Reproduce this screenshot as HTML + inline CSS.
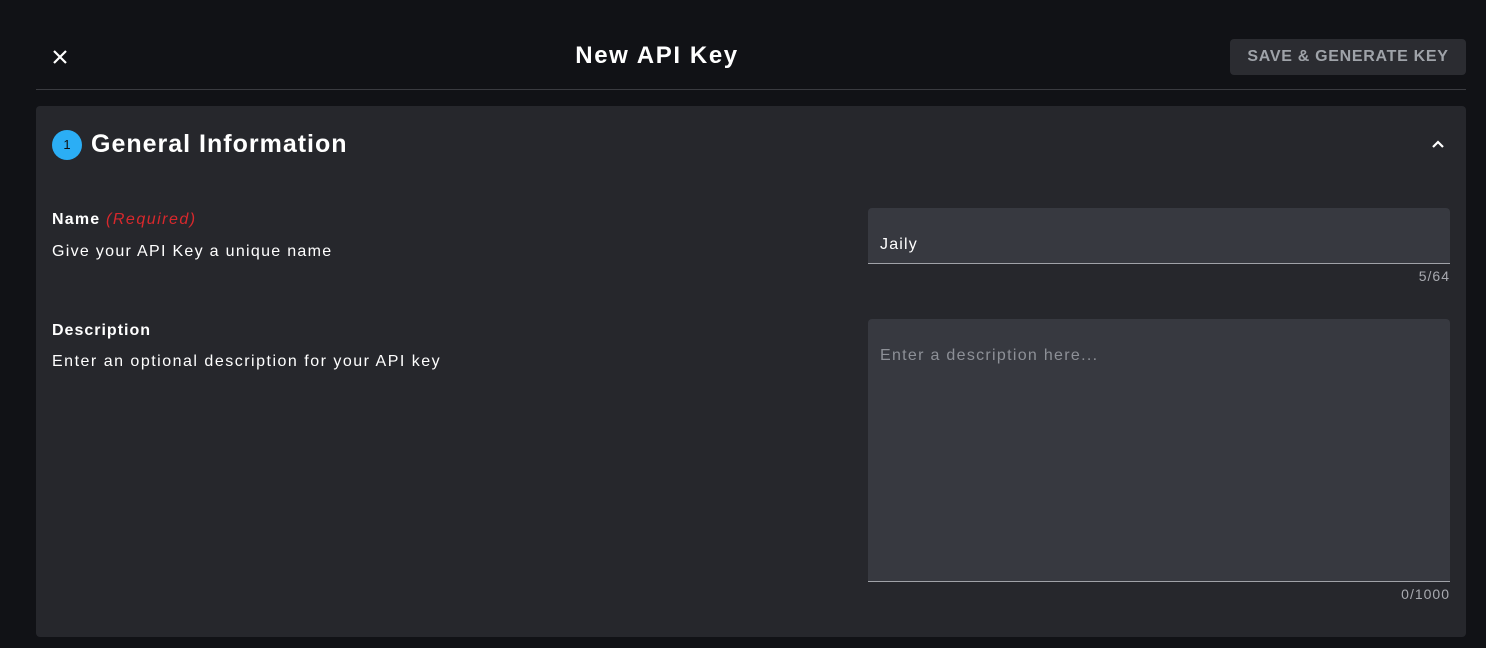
<!DOCTYPE html>
<html><head><style>
*{margin:0;padding:0;box-sizing:border-box}
body{width:1486px;height:648px;background:#111216;font-family:"Liberation Sans",sans-serif;color:#fff;position:relative;overflow:hidden}
.abs{position:absolute}
</style></head><body>
<svg class="abs" style="left:52px;top:49px" width="16" height="16" viewBox="0 0 16 16"><path d="M2 2L14 14M14 2L2 14" stroke="#fff" stroke-width="2.2"/></svg>
<div class="abs" style="left:0;width:1314px;top:42px;text-align:center;font-size:24px;font-weight:bold;letter-spacing:1.6px">New API Key</div>
<div class="abs" style="left:1230px;top:39px;width:236px;height:36px;background:#2b2c31;border-radius:4px;color:#9fa3a9;font-size:16px;font-weight:bold;text-align:center;line-height:36px;letter-spacing:0.7px">SAVE &amp; GENERATE KEY</div>
<div class="abs" style="left:36px;top:89px;width:1430px;height:1px;background:#3a3b40"></div>
<div class="abs" style="left:36px;top:106px;width:1430px;height:531px;background:#26272c;border-radius:4px"></div>
<div class="abs" style="left:52px;top:130px;width:30px;height:30px;border-radius:50%;background:#2baef5;color:#111;font-size:13px;text-align:center;line-height:30px">1</div>
<div class="abs" style="left:91px;top:130px;font-size:25px;font-weight:bold;letter-spacing:1px">General Information</div>
<svg class="abs" style="left:1431px;top:139px" width="14" height="10" viewBox="0 0 14 10"><path d="M2 8L7 3L12 8" stroke="#fff" stroke-width="2.2" fill="none"/></svg>
<div class="abs" style="left:52px;top:211px;font-size:16px;font-weight:bold;letter-spacing:1.2px">Name <span style="color:#d8282c;font-weight:normal;font-style:italic;letter-spacing:1.5px">(Required)</span></div>
<div class="abs" style="left:52px;top:243px;font-size:16px;letter-spacing:1.3px">Give your API Key a unique name</div>
<div class="abs" style="left:868px;top:208px;width:582px;height:56px;background:#373940;border-radius:4px 4px 0 0;border-bottom:1px solid #a0a2a8"></div>
<div class="abs" style="left:880px;top:236px;font-size:16px;letter-spacing:1.2px">Jaily</div>
<div class="abs" style="left:1300px;width:150px;top:268px;text-align:right;font-size:14px;letter-spacing:1px;color:#a8aab0">5/64</div>
<div class="abs" style="left:52px;top:322px;font-size:16px;font-weight:bold;letter-spacing:1px">Description</div>
<div class="abs" style="left:52px;top:353px;font-size:16px;letter-spacing:1.5px">Enter an optional description for your API key</div>
<div class="abs" style="left:868px;top:319px;width:582px;height:263px;background:#373940;border-radius:4px 4px 0 0;border-bottom:1px solid #a0a2a8"></div>
<div class="abs" style="left:880px;top:347px;font-size:16px;color:#8d9097;letter-spacing:1.3px">Enter a description here...</div>
<div class="abs" style="left:1300px;width:150px;top:586px;text-align:right;font-size:14px;letter-spacing:1px;color:#a8aab0">0/1000</div>
</body></html>
